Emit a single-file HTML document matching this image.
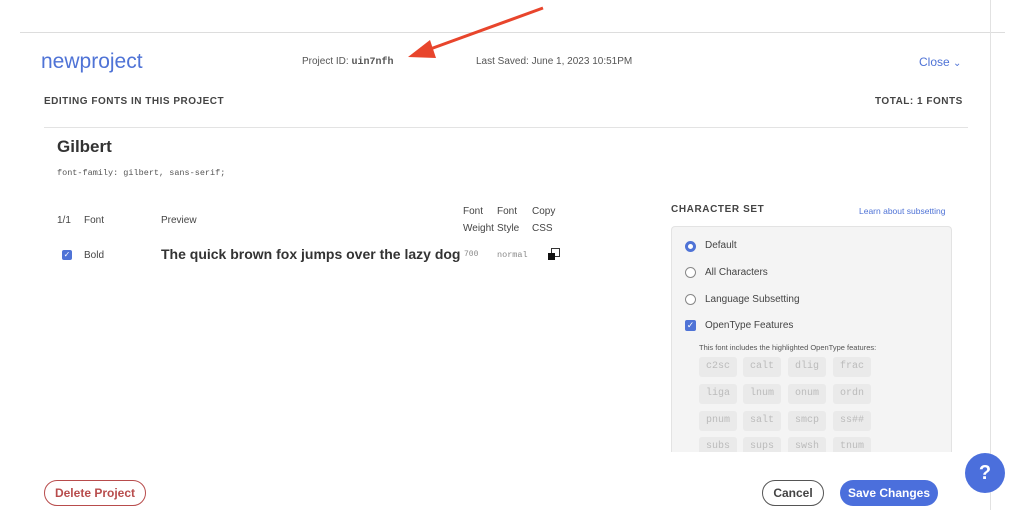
<!DOCTYPE html>
<html><head><style>
*{margin:0;padding:0;box-sizing:border-box}
body{width:1024px;height:523px;background:#fff;position:relative;overflow:hidden;font-family:"Liberation Sans",sans-serif;color:#333}
.a{position:absolute;white-space:nowrap}
.m{font-family:"Liberation Mono",monospace}
.chip{position:absolute;width:38px;height:20px;background:#eaeaea;border-radius:3px;color:#bbb;font-family:"Liberation Mono",monospace;font-size:10px;text-align:center;line-height:20px}
.btn{position:absolute;height:26px;border-radius:13px;font-size:12px;font-weight:bold;display:flex;align-items:center;justify-content:center}
</style></head><body>
<div class="a" style="left:20px;top:32px;width:985px;height:1px;background:#ddd"></div>
<div class="a" style="left:990px;top:0;width:1px;height:510px;background:#e2e2e2"></div>
<svg class="a" style="left:400px;top:0" width="160" height="70"><line x1="143" y1="8" x2="22" y2="52" stroke="#e8452c" stroke-width="3"/><polygon points="8,57 30,40 36,58" fill="#e8452c"/></svg>
<div class="a" style="left:41px;top:50px;font-size:21px;color:#4f73d6">newproject</div>
<div class="a" style="left:302px;top:56px;font-size:10px;color:#555">Project ID: <span class="m" style="font-weight:bold;font-size:10px">uin7nfh</span></div>
<div class="a" style="left:476px;top:56px;font-size:10px;color:#555">Last Saved: June 1, 2023 10:51PM</div>
<div class="a" style="left:919px;top:55px;font-size:12px;color:#4f73d6">Close <span style="font-size:10px">&#8964;</span></div>
<div class="a" style="left:44px;top:96px;font-size:10px;font-weight:bold;letter-spacing:.5px;color:#444">EDITING FONTS IN THIS PROJECT</div>
<div class="a" style="left:875px;top:96px;font-size:10px;font-weight:bold;letter-spacing:.5px;color:#444">TOTAL: 1 FONTS</div>
<div class="a" style="left:44px;top:127px;width:924px;height:1px;background:#e3e3e3"></div>
<div class="a" style="left:57px;top:137px;font-size:17px;font-weight:bold;color:#333">Gilbert</div>
<div class="a m" style="left:57px;top:168px;font-size:8.5px;color:#555">font-family: gilbert, sans-serif;</div>
<div class="a" style="left:57px;top:215px;font-size:10px;color:#444">1/1</div>
<div class="a" style="left:84px;top:215px;font-size:10px;color:#444">Font</div>
<div class="a" style="left:161px;top:215px;font-size:10px;color:#444">Preview</div>
<div class="a" style="left:463px;top:203px;font-size:10px;color:#444;line-height:17px">Font<br>Weight</div>
<div class="a" style="left:497px;top:203px;font-size:10px;color:#444;line-height:17px">Font<br>Style</div>
<div class="a" style="left:532px;top:203px;font-size:10px;color:#444;line-height:17px">Copy<br>CSS</div>
<div class="a" style="left:62px;top:250px;width:10px;height:10px;background:#4f73d6;border-radius:2px;color:#fff;font-size:8px;line-height:10px;text-align:center">✓</div>
<div class="a" style="left:84px;top:250px;font-size:10px;color:#444">Bold</div>
<div class="a" style="left:161px;top:246px;font-size:14px;font-weight:bold;color:#333">The quick brown fox jumps over the lazy dog</div>
<div class="a m" style="left:464px;top:250px;font-size:8px;color:#888">700</div>
<div class="a m" style="left:497px;top:250px;font-size:8.5px;color:#888">normal</div>
<div class="a" style="left:551px;top:248px;width:9px;height:9px;border:1px solid #333;background:#fff"></div>
<div class="a" style="left:548px;top:253px;width:7px;height:7px;background:#111"></div>
<div class="a" style="left:671px;top:204px;font-size:10px;font-weight:bold;letter-spacing:.6px;color:#444">CHARACTER SET</div>
<div class="a" style="left:859px;top:206px;font-size:8.5px;color:#4f73d6">Learn about subsetting</div>
<div class="a" style="left:671px;top:226px;width:281px;height:226px;background:#f4f4f4;border:1px solid #e3e3e3;border-bottom:none;border-radius:4px 4px 0 0"></div>
<div class="a" style="left:685px;top:241px;width:11px;height:11px;border-radius:50%;border:3px solid #4f73d6;background:#fff"></div>
<div class="a" style="left:705px;top:240px;font-size:10px;color:#444">Default</div>
<div class="a" style="left:685px;top:267px;width:11px;height:11px;border-radius:50%;border:1px solid #888;background:#fff"></div>
<div class="a" style="left:705px;top:267px;font-size:10px;color:#444">All Characters</div>
<div class="a" style="left:685px;top:294px;width:11px;height:11px;border-radius:50%;border:1px solid #888;background:#fff"></div>
<div class="a" style="left:705px;top:294px;font-size:10px;color:#444">Language Subsetting</div>
<div class="a" style="left:685px;top:320px;width:11px;height:11px;background:#4f73d6;border-radius:2px;color:#fff;font-size:9px;line-height:11px;text-align:center">✓</div>
<div class="a" style="left:705px;top:320px;font-size:10px;color:#444">OpenType Features</div>
<div class="a" style="left:699px;top:343px;font-size:7.5px;color:#555">This font includes the highlighted OpenType features:</div>
<div class="chip" style="left:699px;top:357px">c2sc</div><div class="chip" style="left:743px;top:357px">calt</div><div class="chip" style="left:788px;top:357px">dlig</div><div class="chip" style="left:833px;top:357px">frac</div>
<div class="chip" style="left:699px;top:384px">liga</div><div class="chip" style="left:743px;top:384px">lnum</div><div class="chip" style="left:788px;top:384px">onum</div><div class="chip" style="left:833px;top:384px">ordn</div>
<div class="chip" style="left:699px;top:411px">pnum</div><div class="chip" style="left:743px;top:411px">salt</div><div class="chip" style="left:788px;top:411px">smcp</div><div class="chip" style="left:833px;top:411px">ss##</div>
<div style="position:absolute;left:671px;top:437px;width:282px;height:15px;overflow:hidden">
<div class="chip" style="left:28px;top:0">subs</div><div class="chip" style="left:72px;top:0">sups</div><div class="chip" style="left:117px;top:0">swsh</div><div class="chip" style="left:162px;top:0">tnum</div></div>
<div class="btn" style="left:44px;top:480px;width:102px;border:1.5px solid #b84c4c;color:#b84c4c">Delete Project</div>
<div class="btn" style="left:762px;top:480px;width:62px;border:1.5px solid #555;color:#444">Cancel</div>
<div class="btn" style="left:840px;top:480px;width:98px;background:#4b6fdc;color:#fff">Save Changes</div>
<div class="a" style="left:965px;top:453px;width:40px;height:40px;border-radius:50%;background:#4b6fdc;color:#fff;font-size:20px;font-weight:bold;text-align:center;line-height:40px">?</div>
</body></html>
